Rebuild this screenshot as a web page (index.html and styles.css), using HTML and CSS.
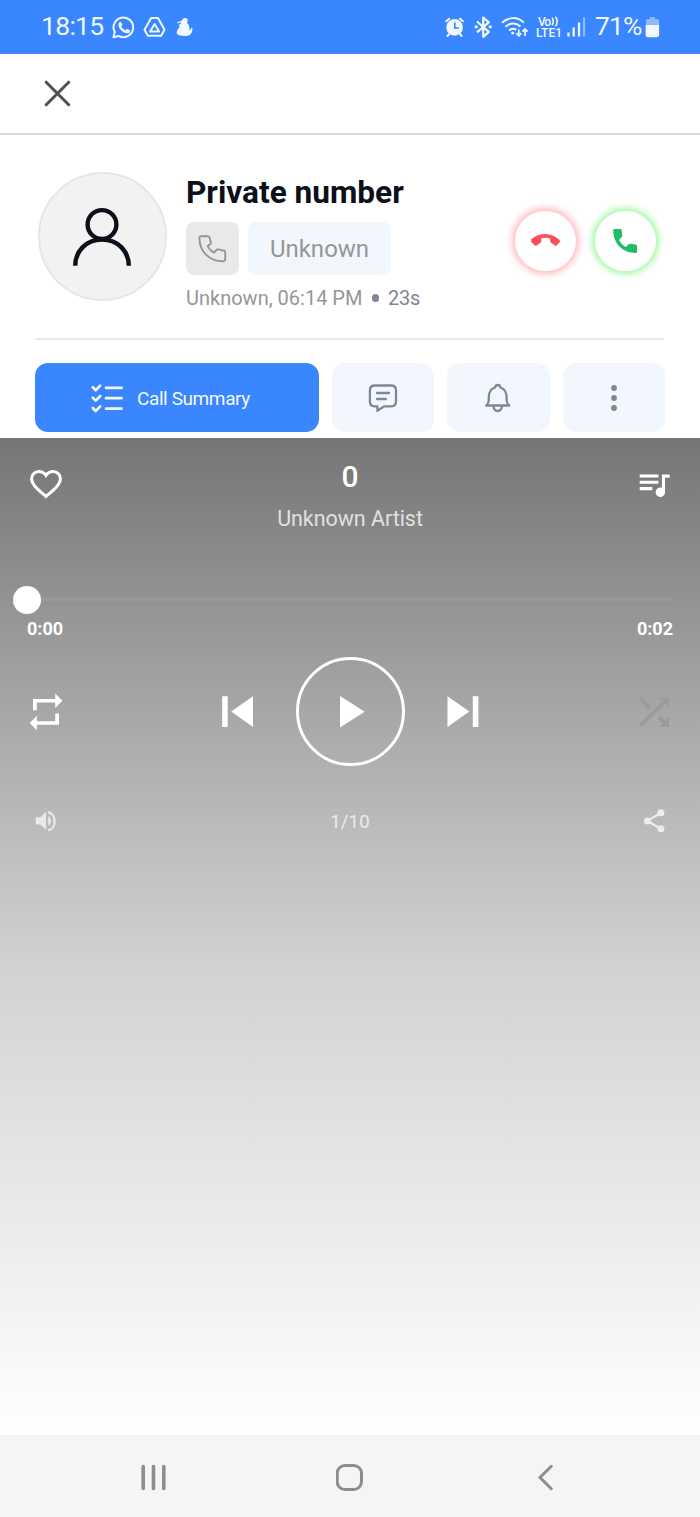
FILE: index.html
```html
<!DOCTYPE html>
<html lang="en">
<head>
<meta charset="utf-8">
<title>Private number</title>
<link rel="stylesheet" href="styles.css">
</head>
<body>
<div class="screen">
  <header class="status">
    <span class="clock">18:15</span>
    <svg class="status-left" width="90" height="30" viewBox="110 12 90 30" fill="none" stroke="#f0f7ff" stroke-width="2">
      <path d="M113.5 37.3l1.3-5.2a9.8 9.8 0 1 1 4 3.9z" stroke-linejoin="round"/>
      <path d="M119.2 22.4c.8-.8 1.800-.7 2.200.2l.9 2c.2.600-.8 1.500-1 1.900.8 1.800 2.300 3 4.200 3.800.5-.2 1.300-1.600 1.900-1.300l2.200 1.100c.8.400.4 1.900-.4 2.600-1.600 1.400-4.800.5-7.200-1.600-2.600-2.300-4.700-6.100-2.800-8.700z" fill="#f0f7ff" stroke="none"/>
      <path d="M151.200 18h6.800l6.500 11.700-3.300 6h-13.300l-3.400-6z" stroke-linejoin="round"/>
      <path d="M154.600 24l4.500 7.500h-9z" stroke-linejoin="round"/>
      <path d="M183.800 18.200c2.200-1 4.400.5 3.900 2.700-.2 1-.8 1.500-.6 2.200 1.500 1 2.400 3 2.300 5.300l.4 2.400c1.300-.7.700-2.600 2.100-3.200 1.100.9.400 4.900-1.100 6.400-1.300 1.700-4 2-6.700 2-3.300 0-7.200-.6-7.400-3.400-.2-2.400 1.700-3.600 2.500-5 .6-1 .3-1.600-.5-2.200.4-.9 1.500-.9 2-1.600l.4-1.200c-.9 0-3 1.200-4 .3.500-1.700 3.400-1.300 4.700-2.500.8-.7.700-1.800 2-2.200z" fill="#f0f7ff" stroke="none"/>
    </svg>
    <svg class="status-right" width="148" height="30" viewBox="442 12 148 30" fill="none" stroke="#f0f7ff" stroke-width="2">
      <circle cx="454.600" cy="27.400" r="8.300" fill="#f0f7ff" stroke="none"/>
      <path d="M446.200 21.200l3-2.500M463 21.200l-3-2.500M449.200 34l-1.700 2M460 34l1.700 2" stroke-linecap="round"/>
      <path d="M454.800 22.500v5.500h4" stroke="#3a86ff" stroke-width="1.700"/>
      <path d="M477 21.500l11.800 10.300-5.600 5V17.600l5.600 4.700L477 32.300" stroke-width="2.300" stroke-linejoin="round"/>
      <path d="M474.700 26.900h3M488.800 26.900h3" stroke-width="2.800"/>
      <path d="M502 22.800c6.500-6.200 15.500-6.200 21.800-.2M505.500 26.800c4.500-4.300 10.500-4.300 15-.2M509 30.500c2.300-2.200 5-2.200 7.200-.6"/>
      <circle cx="512.700" cy="33" r="1.600" fill="#f0f7ff" stroke="none"/>
      <path d="M518.800 29.500v6M516.300 33.200l2.500 2.700 2.500-2.700M525 36v-6.500M522.500 31.600l2.500-2.700 2.500 2.700" stroke-width="1.700"/>
      <g class="lte"><text x="538" y="25.800" textLength="13">Vo</text><text x="536" y="37" textLength="26">LTE1</text></g>
      <path d="M552 17.800q2.700 3.700 0 7.400M555.500 16.800q3.500 4.700 0 9.400" stroke-width="1.600"/>
      <path d="M568.500 32.600v4M573.700 27.600v9M579 22.500v14.100" stroke-width="2.300"/>
      <path d="M584 17.500v19.100" stroke-width="2.300" opacity=".45"/>
    </svg>
    <span class="percent">71%</span>
    <svg width="18" height="26" viewBox="644 14 18 26">
      <path d="M650 17h5v2h2.500q1.500 0 1.500 1.500V26h-13v-5.500Q646 19 647.500 19H650z" fill="#8eb9ff"/>
      <path d="M645.600 25h13.500v10q0 2.300-2.300 2.300h-8.900q-2.300 0-2.300-2.300z" fill="#f0f7ff"/>
    </svg>
  </header>

  <div class="closebar">
    <svg width="30" height="30" viewBox="43 78.500 30 30" stroke="#505050" stroke-width="3" stroke-linecap="round"><path d="M46.200 81.700l22.500 22.500M68.700 81.700l-22.500 22.500"/></svg>
  </div>

  <main class="call">
    <section class="contact">
      <div class="avatar">
        <svg width="64" height="64" viewBox="70 204 64 64" fill="none" stroke="#0c1119" stroke-width="4.400"><circle cx="102" cy="223.500" r="14.400"/><path d="M75.200 264.800c0-14 10.500-26.300 26.800-26.300S128.800 250.800 128.800 264.800"/></svg>
      </div>
      <div class="info">
        <h1>Private number</h1>
        <div class="chips">
          <span class="chip-phone"><svg width="30" height="30" viewBox="197.500 234 30 30" fill="none" stroke="#969696" stroke-width="1.900" stroke-linejoin="round"><path d="M200.300 236.300h7q1.200 0 1.600 1.100l1.500 4.800q.3 1.100-.6 1.900l-2.600 2.200c1.500 3 3.500 4.800 6.300 6.300l2.600-2.800q.7-.7 1.800-.4l5.600 1.300q1.200.3 1.200 1.500v6.900q0 2.200-2.200 2.200c-12.900 0-23.200-8.800-23.600-22.800q-.1-2.200 1.400-2.200z"/></svg></span>
          <span class="chip-name">Unknown</span>
        </div>
        <p class="meta"><span class="when">Unknown, 06:14 PM</span><i class="dot"></i><span class="length">23s</span></p>
      </div>
      <div class="answers">
        <span class="answer decline"><svg width="34" height="18" viewBox="528.300 231.700 34 18"><path d="M530.800 239.600c7.500-8 21.500-8 29 0 .7.800.7 1.700.1 2.400l-2.700 2.900c-.6.700-1.400.7-2.100.2l-3.800-2.600c-.7-.5-.8-1-.8-1.900v-2.400c-3-1-5.700-1-8.900 0v2.400c0 .9-.1 1.400-.8 1.900l-3.800 2.600c-.7.500-1.500.5-2.100-.2l-3.100-2.900c-.6-.7-.5-1.800 0-2.400z" fill="#fb4f59"/></svg></span>
        <span class="answer accept"><svg width="28" height="28" viewBox="611 227 28 28"><path d="M614.600 229h5.600q1.300 0 1.500 1.400l.6 5q.1 1-.6 1.700l-2.700 2.900c2 3.600 3.700 5.300 6.800 7l3-2.700q.7-.6 1.500-.5l5.200.7q1.500.2 1.500 1.600v5.600q0 1.300-1.400 1.300c-13 0-22.400-9.600-22.400-22.700q0-1.300 1.400-1.300z" fill="#21bc66"/></svg></span>
      </div>
    </section>

    <section class="actions">
      <button class="btn summary">
        <svg width="34" height="30" viewBox="90 383 34 30" fill="none" stroke="#f3f8ff" stroke-width="2.700" stroke-linecap="round" stroke-linejoin="round"><path d="M92.800 387.200l2.900 3 4.500-4.600M92.800 397.600l2.900 3 4.500-4.600M92.800 408l2.900 3 4.500-4.600M106 387.900h15.500M106 398.200h15.500M106 408.600h15.500"/></svg>
        <span>Call Summary</span>
      </button>
      <button class="btn"><svg width="32" height="32" viewBox="367 382 32 32" fill="none" stroke="#80869a" stroke-width="2.300" stroke-linejoin="round" stroke-linecap="round"><path d="M374.700 385.500h16.500q4.800 0 4.800 4.800v11.300q0 4.800-4.800 4.800H384l-6.600 4.400v-4.400h-2.700q-4.800 0-4.800-4.800v-11.300q0-4.800 4.800-4.800zM377 393h12M377 399h8.800"/></svg></button>
      <button class="btn"><svg width="32" height="32" viewBox="482 382 32 32" fill="none" stroke="#80869a" stroke-width="2.300" stroke-linejoin="round" stroke-linecap="round"><path d="M497.700 385c1.400 0 2.400 1 2.700 2.500 4 1.400 6.200 5 6.200 9.500v3.500c0 2 .9 3.300 2.600 5h-23c1.700-1.700 2.600-3 2.600-5V397c0-4.500 2.200-8.100 6.200-9.500.3-1.500 1.300-2.500 2.700-2.500zM493.400 405.800c.2 3.200 1.900 5.200 4.300 5.200s4.100-2 4.300-5.200"/></svg></button>
      <button class="btn"><svg width="10" height="30" viewBox="609 382.500 10 30" fill="#80869a"><circle cx="614" cy="387.500" r="2.900"/><circle cx="614" cy="397.500" r="2.900"/><circle cx="614" cy="407.500" r="2.900"/></svg></button>
    </section>
  </main>

  <section class="player">
    <div class="track-head">
      <svg width="36" height="36" viewBox="28 466 36 36" fill="none" stroke="#fff" stroke-width="3"><path d="M46 496.500C38 489.500 31.600 484.500 31.600 478.800c0-4.200 3.200-7.300 7.200-7.300 2.900 0 5.500 1.400 7.200 3.900 1.700-2.500 4.300-3.900 7.200-3.900 4 0 7.200 3.100 7.200 7.300 0 5.700-6.400 10.700-14.400 17.700z"/></svg>
      <div class="track"><h2>0</h2><p>Unknown Artist</p></div>
      <svg width="36" height="36" viewBox="636.300 466 36 36" fill="#fff"><path d="M640 474.500h18.800v3H640zM640 480.800h18.800v3H640zM640 487h12.600v3.200H640z"/><path d="M662.200 474.500h7.800v3.200h-4.700v14.500a4.700 4.700 0 1 1-3.100-4.400z"/></svg>
    </div>
    <div class="slider"><span class="knob"></span><span class="rail"></span></div>
    <div class="times"><span>0:00</span><span>0:02</span></div>
    <div class="controls">
      <svg width="36" height="40" viewBox="28 692 36 40" fill="#fff"><path d="M33 699h22.200v-5.500l7.300 7.200-7.300 7.300v-5.500H36.800v7.700H33zM59 724.800H36.900v5.500l-7.300-7.300 7.300-7.200v5.400h18.300v-7.600H59z"/></svg>
      <div class="transport">
        <svg width="32" height="32" viewBox="222 696 32 32" fill="#fff"><path d="M222.200 696.200h5.500v30.800h-5.500zM253 696.200v30.800l-21.800-15.400z"/></svg>
        <div class="play"><svg width="26" height="32" viewBox="341 696 26 32" fill="#fff"><path d="M341 696v31.600l24.700-15.800z"/></svg></div>
        <svg width="32" height="32" viewBox="446.500 696 32 32" fill="#fff"><path d="M447 696.200v30.800l21.800-15.400zM472.300 696.200h5.600v30.800h-5.600z"/></svg>
      </div>
      <svg width="36" height="40" viewBox="636 692 36 40" fill="#9b9b9b"><path d="M641.800 697.400l9.100 9-2.700 2.800-9.100-9.200zM658.500 697h10.500v10.500l-3.800-3.800L641.900 727l-2.700-2.700 23.200-23.400zM660 715.500l5.200 5 3.800-3.800V727h-10.500l3.900-3.800-5.100-5z"/></svg>
    </div>
    <div class="foot">
      <svg width="28" height="28" viewBox="32 807 28 28" fill="#e9e9e9"><path d="M35.700 817.200h4.600l5.800-5.200v17.700l-5.800-5.200h-4.600z"/><path d="M48.200 816.200c3.700 2.200 3.700 7.200 0 9.400z"/><path d="M48 812.200c8.800 1.700 8.800 16.900 0 18.200" fill="none" stroke="#e9e9e9" stroke-width="2.300"/></svg>
      <span>1/10</span>
      <svg width="28" height="28" viewBox="640 807 28 28" fill="#ededed"><path d="M660.800 813l-13.500 7.900 13.500 7.800" fill="none" stroke="#ededed" stroke-width="2.200"/><circle cx="660.900" cy="812.700" r="3.500"/><circle cx="647.300" cy="820.900" r="3.500"/><circle cx="660.900" cy="828.700" r="3.500"/></svg>
    </div>
  </section>

  <nav class="nav">
    <svg width="28" height="28" viewBox="140 1464 28 28" stroke="#8d8d8d" stroke-width="3.600" stroke-linecap="round"><path d="M143.200 1466.500v22M153.500 1466.500v22M163.800 1466.500v22"/></svg>
    <svg width="28" height="28" viewBox="336 1464 28 28" fill="none" stroke="#8d8d8d" stroke-width="3"><rect x="337.200" y="1465.500" width="24.300" height="24" rx="7.800"/></svg>
    <svg width="28" height="28" viewBox="532 1464 28 28" fill="none" stroke="#8d8d8d" stroke-width="3" stroke-linecap="round"><path d="M551.300 1466.300l-11.300 11.200 11.300 11.200"/></svg>
  </nav>
</div>
</body>
</html>
```
FILE: styles.css
```css
* { box-sizing: border-box; }
body, h1, h2, p { margin: 0; }
body { background: #fff; font-family: Roboto, "Liberation Sans", sans-serif; }
svg { display: block; flex: none; }
.screen { display: flex; flex-direction: column; width: 700px; height: 1517px; overflow: hidden; }

.status { display: flex; align-items: center; height: 54px; padding-left: 41px; background: #3a86ff; color: #f0f7ff; font-size: 26.5px; line-height: 54px; white-space: nowrap; }
.clock { width: 69px; height: 54px; line-height: 52px; letter-spacing: -.7px; }
.status-right { margin-left: 242px; }
.lte { fill: #f0f7ff; stroke: none; font-size: 12px; font-weight: 500; }
.percent { width: 49px; height: 54px; margin-left: 5px; line-height: 52px; letter-spacing: -.9px; }

.closebar { height: 81px; padding: 24.5px 43px; border-bottom: 2px solid #d9d9d9; }

.call { height: 303px; padding: 37px 35px 0; }
.contact { display: flex; height: 168px; margin: 0 1px; border-bottom: 2px solid #e7e7e7; }
.avatar { display: flex; align-items: center; justify-content: center; width: 129px; height: 129px; margin-left: 1.5px; border: 2px solid #e6e6e6; border-radius: 50%; background: #f2f2f2; }
.info { width: 310px; margin-left: 19.5px; white-space: nowrap; }
.info h1 { height: 50px; font-size: 31.6px; font-weight: 700; line-height: 42px; color: #0c1119; }
.chips { display: flex; gap: 9px; height: 53px; }
.chip-phone, .chip-name { display: flex; align-items: center; justify-content: center; border-radius: 8px; }
.chip-phone { width: 53px; background: #e8e9ea; }
.chip-name { width: 143px; background: #f2f7fe; color: #969696; font-size: 24px; }
.meta { display: flex; align-items: center; height: 46px; color: #969696; font-size: 20px; }
.when { width: 176.5px; }
.dot { width: 7.5px; height: 7.5px; margin: 0 9px; border-radius: 50%; background: #80869a; }
.length { color: #80869a; letter-spacing: -.2px; }
.answers { display: flex; gap: 19.5px; margin: 38.5px 0 0 19px; }
.answer { display: flex; align-items: center; justify-content: center; width: 60.5px; height: 60.5px; border-radius: 50%; background: #fff; }
.decline { box-shadow: 0 0 7px 3px #ffb9bd; }
.accept { box-shadow: 0 0 7px 3px #a5f6a7; }

.actions { display: grid; grid-template-columns: 284px 102.3px 102.3px 102.3px; gap: 13px; margin-top: 23px; }
.btn { display: flex; align-items: center; justify-content: center; height: 69px; padding: 0; border: 0; border-radius: 13px; background: #f2f7fe; font-family: inherit; }
.summary { justify-content: flex-start; gap: 13px; padding: 1px 0 0 55px; background: #3a86ff; color: #f3f8ff; font-size: 19px; letter-spacing: -.4px; }

.player { flex: 1; background: linear-gradient(#757575 0, #9c9c9c 212px, #bfbfbf 412px, #d2d2d2 532px, #e4e4e4 712px, #fff 997px); color: #fff; }
.track-head { display: flex; justify-content: space-between; height: 147px; padding: 28px 28px 0; }
.track { margin-top: -10px; text-align: center; }
.track h2 { height: 43px; font-size: 30px; font-weight: 500; line-height: 42px; }
.track p { color: #e0e0e0; font-size: 21.5px; line-height: 40px; letter-spacing: -.05px; }
.slider { display: flex; align-items: center; height: 29px; padding: 0 28px 0 13px; }
.knob { width: 28px; height: 28px; border-radius: 50%; background: #fff; }
.rail { flex: 1; height: 3px; background: #999; }
.times { display: flex; justify-content: space-between; padding: 0 27px; font-size: 18px; font-weight: 700; line-height: 30px; }
.controls { display: flex; align-items: center; justify-content: space-between; height: 109px; margin-top: 13px; padding: 0 28px; }
.transport { display: flex; align-items: center; gap: 42px; }
.play { display: flex; align-items: center; justify-content: center; width: 109px; height: 109px; padding-left: 5px; border: 3px solid #fff; border-radius: 50%; }
.foot { display: flex; align-items: center; justify-content: space-between; height: 28px; margin-top: 41px; padding: 0 32px; color: #ececec; font-size: 18.5px; letter-spacing: .2px; }
.foot span { padding-top: 2px; }

.nav { display: flex; justify-content: space-between; height: 82px; padding: 29px 140px 0; background: #f5f5f5; }
```
